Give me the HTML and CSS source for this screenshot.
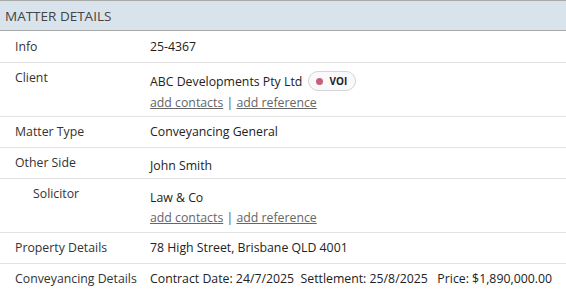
FILE: index.html
```html
<!DOCTYPE html>
<html lang="en">
<head>
  <meta charset="UTF-8">
  <title>Matter Details</title>
  <link rel="stylesheet" href="styles.css">
</head>
<body>
  <div class="panel">
    <div class="panel-head">MATTER DETAILS</div>

    <div class="row first">
      <div class="label">Info</div>
      <div class="value">25-4367</div>
    </div>

    <div class="row two client">
      <div class="label">Client</div>
      <div class="value">
        <div class="main tall">ABC Developments Pty Ltd <span class="badge"><span class="dot"></span>VOI</span></div>
        <div class="links"><a href="#">add contacts</a> | <a href="#">add reference</a></div>
      </div>
    </div>

    <div class="row">
      <div class="label">Matter Type</div>
      <div class="value">Conveyancing General</div>
    </div>

    <div class="row">
      <div class="label">Other Side</div>
      <div class="value lower">John Smith</div>
    </div>

    <div class="row two">
      <div class="label sub">Solicitor</div>
      <div class="value">
        <div class="main sunk">Law &amp; Co</div>
        <div class="links"><a href="#">add contacts</a> | <a href="#">add reference</a></div>
      </div>
    </div>

    <div class="row">
      <div class="label">Property Details</div>
      <div class="value">78 High Street, Brisbane QLD 4001</div>
    </div>

    <div class="row last">
      <div class="label">Conveyancing Details</div>
      <div class="value">Contract Date: 24/7/2025&nbsp; Settlement: 25/8/2025&nbsp;&nbsp; Price: $1,890,000.00</div>
    </div>
  </div>
</body>
</html>
```

FILE: styles.css
```css
body {
  margin: 0;
  font-family: "Open Sans", "Noto Sans", sans-serif;
  font-size: 12.3px;
  color: #222;
  background: #fff;
}
.panel {
  width: 566px;
}
.panel-head {
  height: 29px;
  line-height: 30px;
  padding-left: 5px;
  background: #d9e3ec;
  border-top: 1px solid #a9a9a9;
  border-bottom: 1px solid #a9a9a9;
  color: #444;
  font-size: 13.5px;
}
.row {
  display: grid;
  grid-template-columns: 150px 1fr;
  border-bottom: 1px solid #e2e2e2;
  padding: 6px 0;
  line-height: 18px;
}
.row.first {
  padding-top: 7px;
}
.row.two {
  padding-bottom: 5px;
}
.row.client {
  padding-bottom: 4px;
}
.row.last {
  border-bottom: none;
}
.label {
  padding-left: 15px;
  color: #333;
}
.label.sub {
  padding-left: 33px;
}
.value.lower {
  padding-top: 3px;
  margin-bottom: -3px;
}
.main.tall {
  padding-top: 2px;
  line-height: 20px;
}
.main.sunk {
  padding-top: 4px;
}
.links {
  margin-top: 2px;
  color: #555;
}
.links a {
  color: #666;
  text-decoration: underline;
}
.badge {
  display: inline-flex;
  align-items: center;
  gap: 6px;
  height: 18px;
  padding: 0 8px 0 7px;
  margin-left: 3px;
  border: 1px solid #d4d4d4;
  border-radius: 10px;
  background: #f9f9fb;
  font-size: 10px;
  font-weight: bold;
  color: #222;
  vertical-align: 1px;
  line-height: 1;
}
.dot {
  width: 7px;
  height: 7px;
  border-radius: 50%;
  background: #c9607a;
}
```
